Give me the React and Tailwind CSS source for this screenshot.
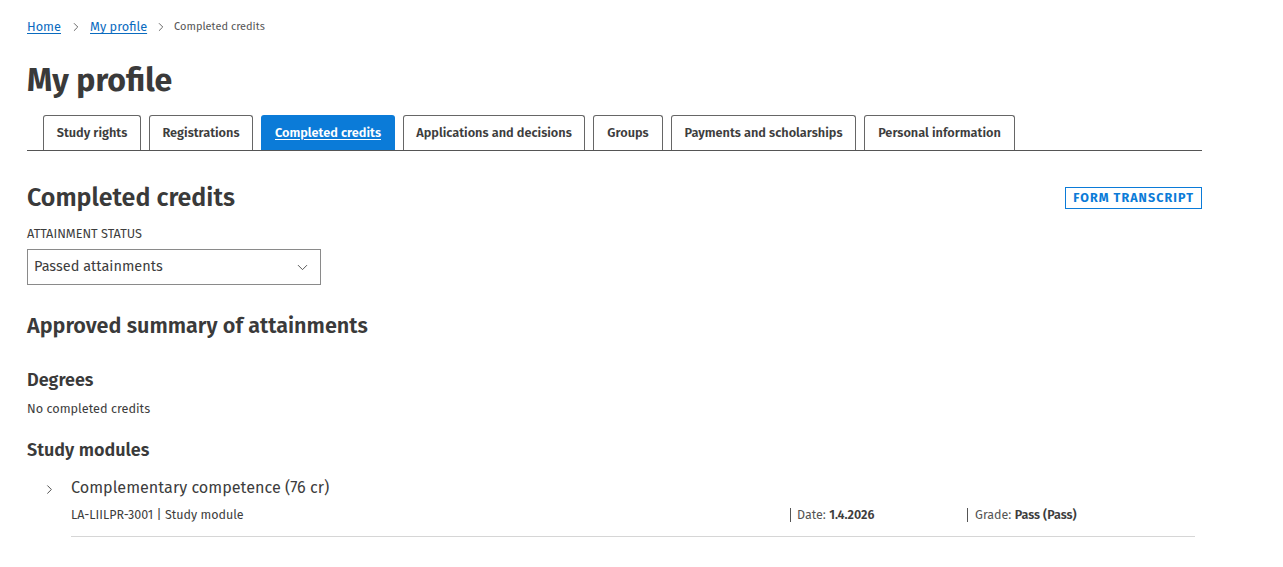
import { ChevronRight, ChevronDown } from 'lucide-react';

const tabs = [
  { label: 'Study rights', w: 'w-[98px]' },
  { label: 'Registrations', w: 'w-[104px]' },
  { label: 'Completed credits', w: 'w-[134px]', active: true },
  { label: 'Applications and decisions', w: 'w-[182px]' },
  { label: 'Groups', w: 'w-[70px]' },
  { label: 'Payments and scholarships', w: 'w-[185px]' },
  { label: 'Personal information', w: 'w-[151px]' },
];

const App = () => {
  return (
    <div
      className="min-h-[567px] bg-white text-[#3d3d3d]"
      style={{ fontFamily: '"Fira Sans", Lato, "Noto Sans", sans-serif' }}
    >
      <div className="ml-[27px] w-[1175px] pt-[19px]">
        {/* Breadcrumb */}
        <nav className="flex items-center h-[16px] text-[12.75px]">
          <a href="#" className="text-[#0a6bbf] underline underline-offset-2">Home</a>
          <ChevronRight className="w-[14px] h-[14px] ml-[8px] mr-[7px] text-[#555]" strokeWidth={1.5} />
          <a href="#" className="text-[#0a6bbf] underline underline-offset-2">My profile</a>
          <ChevronRight className="w-[14px] h-[14px] ml-[7px] mr-[6px] text-[#555]" strokeWidth={1.5} />
          <span className="text-[11px] text-[#555]">Completed credits</span>
        </nav>

        <h1 className="mt-[26px] text-[32px] leading-[38px] font-bold text-[#3a3a3a]">My profile</h1>

        {/* Tabs */}
        <div className="mt-[16px] flex gap-[8px] pl-[16px] border-b border-[#555] h-[36px]">
          {tabs.map((t) => (
            <button
              key={t.label}
              className={`${t.w} h-[35px] rounded-t-[3px] text-[12.75px] font-semibold flex items-center justify-center ${
                t.active
                  ? 'bg-[#0b7bd8] text-white underline underline-offset-2'
                  : 'border border-b-0 border-[#666] text-[#3d3d3d] bg-white'
              }`}
            >
              {t.label}
            </button>
          ))}
        </div>

        {/* Completed credits header */}
        <div className="mt-[31px] flex items-center justify-between">
          <h2 className="text-[25px] leading-[32px] font-semibold text-[#3a3a3a]">Completed credits</h2>
          <button className="border border-[#0b7bd8] text-[#0b7bd8] text-[12.5px] font-bold tracking-[0.085em] px-[7px] h-[22px] leading-[20px]">
            FORM TRANSCRIPT
          </button>
        </div>

        <label className="block mt-[12px] text-[12.7px] leading-[16px] text-[#3d3d3d]">ATTAINMENT STATUS</label>
        <div className="mt-[7px] w-[294px] h-[36px] border border-[#8a8a8a] flex items-center justify-between pl-[6px] pr-[9px]">
          <span className="text-[14.5px]">Passed attainments</span>
          <ChevronDown className="w-[17px] h-[17px] text-[#444]" strokeWidth={1.25} />
        </div>

        <h3 className="mt-[28px] text-[21.6px] leading-[26px] font-semibold text-[#3a3a3a]">
          Approved summary of attainments
        </h3>

        <h4 className="mt-[29px] text-[18px] leading-[24px] font-semibold text-[#3a3a3a]">Degrees</h4>
        <p className="mt-[9px] text-[12.7px] leading-[16px]">No completed credits</p>

        <h4 className="mt-[21px] text-[18px] leading-[24px] font-semibold text-[#3a3a3a]">Study modules</h4>

        {/* Study module item */}
        <div className="mt-[15px] flex">
          <div className="w-[44px] flex justify-end pr-[14px] pt-[5px]">
            <ChevronRight className="w-[15px] h-[15px] text-[#444]" strokeWidth={1.5} />
          </div>
          <div className="w-[1124px] border-b border-[#d6d6d6] pb-[13px]">
            <div className="text-[16.2px] leading-[22px]">Complementary competence (76 cr)</div>
            <div className="mt-[8px] flex text-[12.5px] leading-[16px]">
              <div className="w-[719px]">LA-LIILPR-3001 | Study module</div>
              <div className="w-[177px] border-l border-[#555] pl-[6px] h-[14px] flex items-center mt-[1px]">
                <span className="text-[#555]">Date:&nbsp;</span>
                <span className="font-semibold">1.4.2026</span>
              </div>
              <div className="border-l border-[#555] pl-[7px] h-[14px] flex items-center mt-[1px]">
                <span className="text-[#555]">Grade:&nbsp;</span>
                <span className="font-semibold">Pass (Pass)</span>
              </div>
            </div>
          </div>
        </div>
      </div>
    </div>
  );
};

export default App;
